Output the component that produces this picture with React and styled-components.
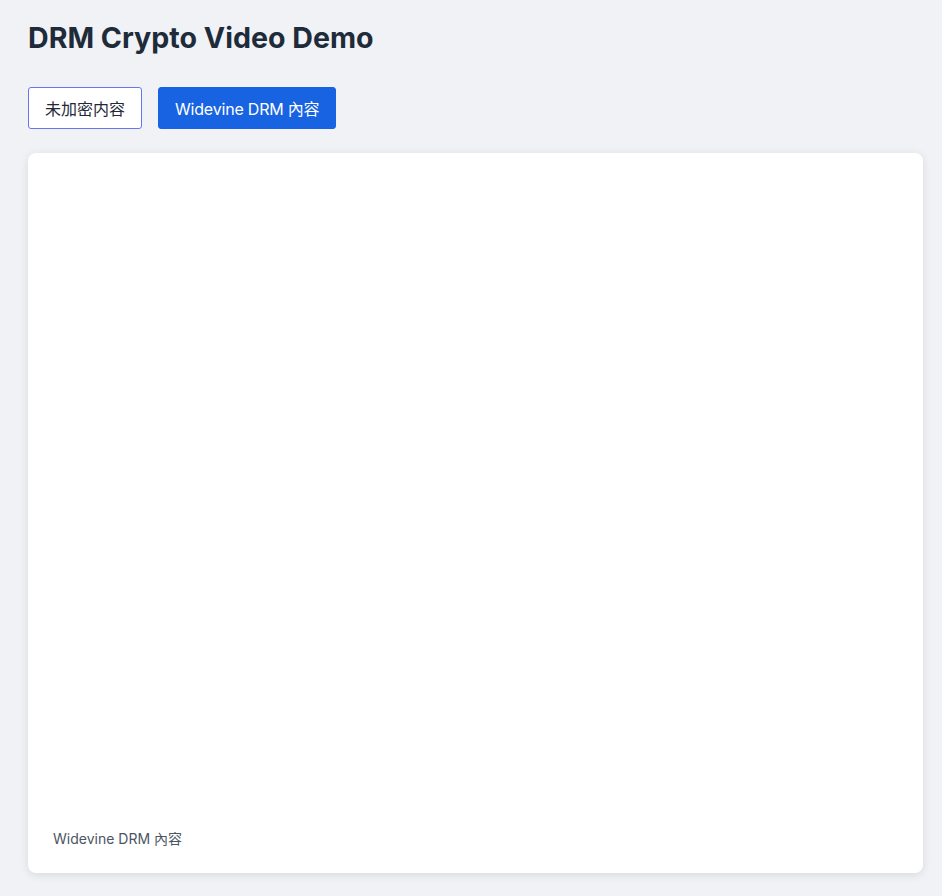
import React, { useState } from "react";
import styled, { createGlobalStyle } from "styled-components";

const GlobalStyle = createGlobalStyle`
  html, body {
    margin: 0;
    padding: 0;
    background: #f0f2f5;
    font-family: Inter, "Noto Sans CJK SC", sans-serif;
  }
`;

const Page = styled.div`
  padding: 20px 19px 24px 28px;
`;

const Title = styled.h1`
  margin: 0;
  font-size: 28.6px;
  line-height: 36px;
  font-weight: 700;
  color: #1e2b3a;
`;

const Toolbar = styled.div`
  display: flex;
  gap: 16px;
  margin-top: 31px;
`;

const TabButton = styled.button`
  height: 42px;
  padding: 0 16px;
  font-family: Inter, "Noto Sans CJK SC", sans-serif;
  font-size: 16px;
  letter-spacing: ${(p) => (p.$active ? "-0.2px" : "0")};
  border-radius: 3px;
  cursor: pointer;
  border: 1px solid ${(p) => (p.$active ? "#1763e2" : "#6675f2")};
  background: ${(p) => (p.$active ? "#1763e2" : "#ffffff")};
  color: ${(p) => (p.$active ? "#ffffff" : "#1f2937")};
`;

const Card = styled.div`
  margin-top: 24px;
  background: #ffffff;
  border-radius: 8px;
  box-shadow: 0 2px 10px rgba(0, 0, 0, 0.1);
  padding: 24px 24px 24px 25px;
  display: flex;
  flex-direction: column;
`;

const VideoArea = styled.div`
  height: 652px;
  background: #ffffff;
`;

const Caption = styled.div`
  font-size: 14px;
  line-height: 20px;
  color: #4b5563;
`;

const sources = ["未加密内容", "Widevine DRM 內容"];

export default function App() {
  const [active, setActive] = useState(1);
  return (
    <>
      <GlobalStyle />
      <Page>
        <Title>DRM Crypto Video Demo</Title>
        <Toolbar>
          {sources.map((s, i) => (
            <TabButton key={s} $active={active === i} onClick={() => setActive(i)}>
              {s}
            </TabButton>
          ))}
        </Toolbar>
        <Card>
          <VideoArea />
          <Caption>{sources[active]}</Caption>
        </Card>
      </Page>
    </>
  );
}
